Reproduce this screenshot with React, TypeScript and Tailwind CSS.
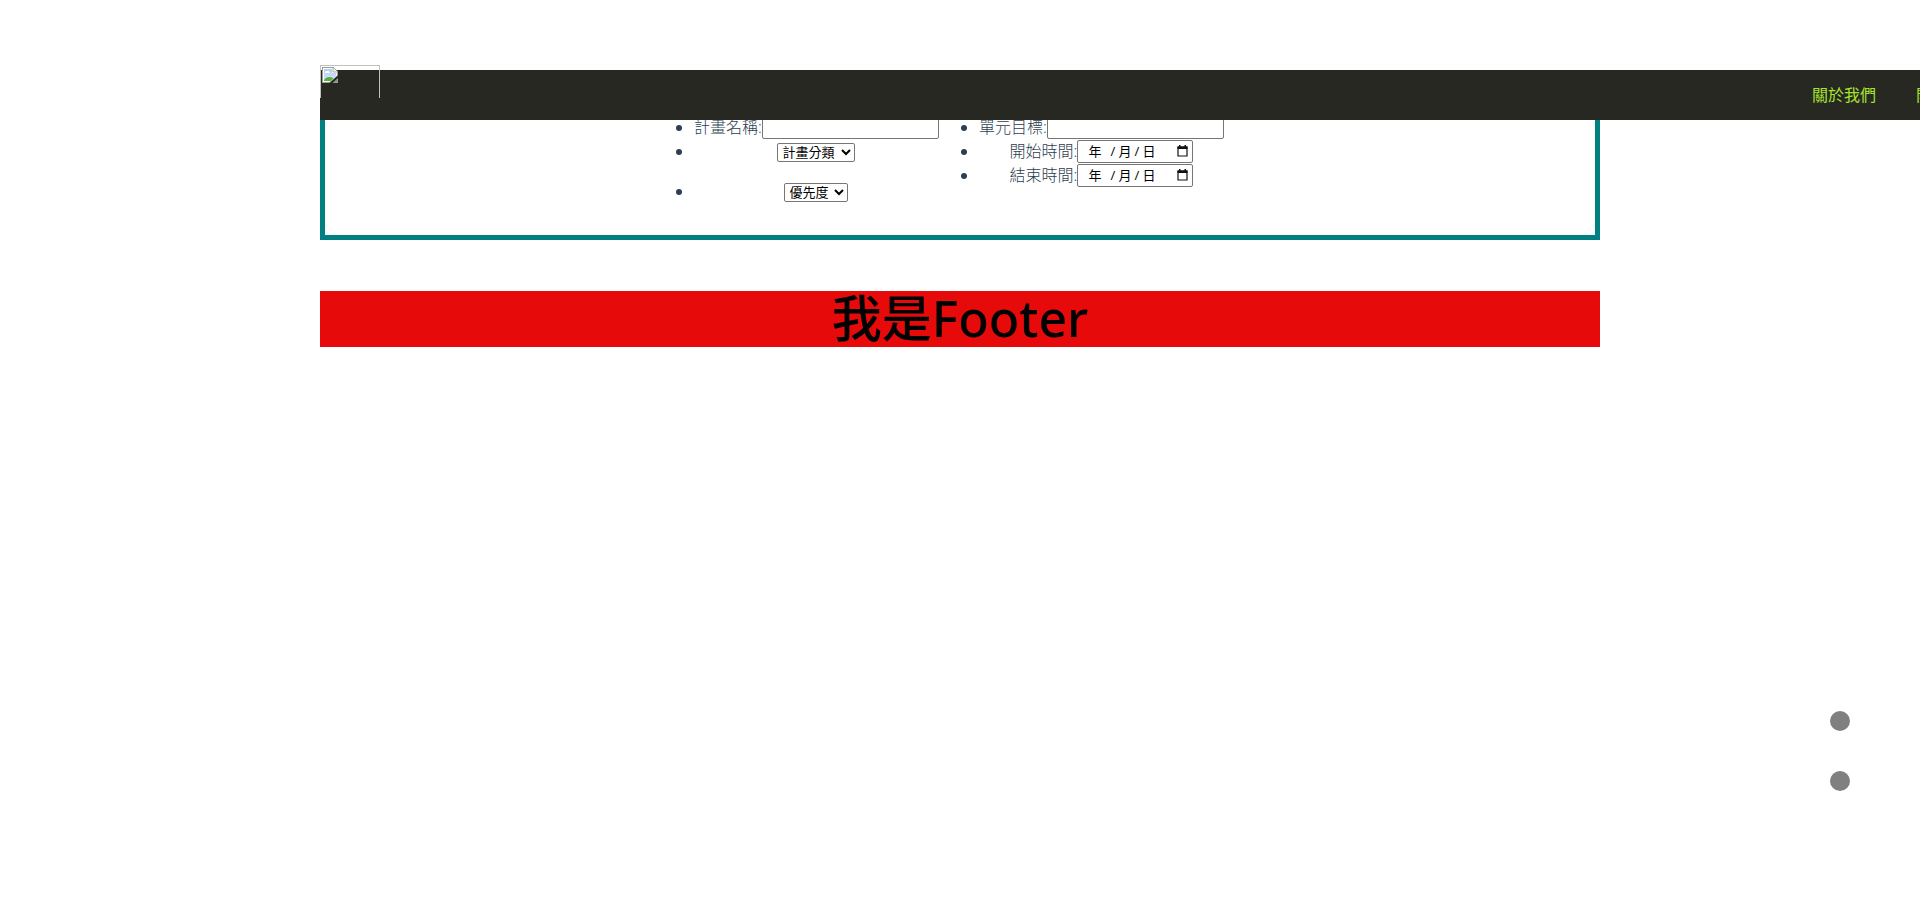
import React from "react";

function BrokenImageIcon() {
  return (
    <svg width="16" height="16" viewBox="0 0 16 16" aria-hidden="true">
      <defs>
        <linearGradient id="sky" x1="0" y1="0" x2="0" y2="1">
          <stop offset="0" stopColor="#b4cdf5" />
          <stop offset="1" stopColor="#dbe6fa" />
        </linearGradient>
      </defs>
      <path d="M0 0H11L16 5V8.500L7.500 16H0Z" fill="#9a9a9a" />
      <path d="M1 1H11V5H15V8.500L7.500 15H1Z" fill="#fff" />
      <path d="M2 2H10V6H14V9L8.500 14H2Z" fill="url(#sky)" />
      <path d="M3 5.500C3 4 5 3.500 5.500 4.200C7 3.500 8 5 7.500 6H3Z" fill="#fff" />
      <path d="M2 14V13C4 9.500 8 9 11.500 11.300L8.500 14Z" fill="#58b03c" />
      <path d="M11 0L16 5H11Z" fill="#f4f4f4" stroke="#9a9a9a" strokeWidth="0.8" />
      <path d="M16 11V16H10.500Z" fill="#9a9a9a" />
      <path d="M15 12.500V15H12Z" fill="#58b03c" />
    </svg>
  );
}

function CalendarIcon() {
  return (
    <svg width="11" height="12" viewBox="0 0 11 12" aria-hidden="true">
      <path d="M1 2H10V11H1Z" fill="none" stroke="#111" strokeWidth="1.2" />
      <path d="M0.500 1.500H10.500V4H0.500ZM2 0H3.500V2H2ZM7.500 0H9V2H7.500Z" fill="#111" />
    </svg>
  );
}

const fieldBorder = "rounded-[2px] border border-[#767676] bg-white font-normal text-black";

function TextField({ id, label }: { id: string; label: string }) {
  return (
    <li className="h-6">
      <div className="flex h-6 items-center">
        <label htmlFor={id}>{label}:</label>
        <input id={id} type="text" className={`h-6 w-[177px] px-1 text-[13px] ${fieldBorder}`} />
      </div>
    </li>
  );
}

function SelectField({ label, width }: { label: string; width: string }) {
  return (
    <li className="h-10">
      <div className="flex h-6 items-center justify-center">
        <span className="relative flex">
          <select aria-label={label} className={`h-[19px] appearance-none pl-1 text-[13px] leading-4 ${width} ${fieldBorder}`}>
            <option>{label}</option>
          </select>
          <svg className="pointer-events-none absolute top-[6px] right-1" width="10" height="7" viewBox="0 0 10 7" aria-hidden="true">
            <path d="M1 1L5 5L9 1" fill="none" stroke="#000" strokeWidth="2" />
          </svg>
        </span>
      </div>
    </li>
  );
}

const segment = "w-[14px] bg-transparent placeholder:text-black placeholder:opacity-100";

function DateField({ id, label }: { id: string; label: string }) {
  return (
    <li className="h-6">
      <div className="flex h-6 items-center justify-center">
        <label htmlFor={id}>{label}:</label>
        <span className={`flex h-[23px] w-[116px] items-center pr-1 pl-[10px] text-[13px] leading-4 ${fieldBorder}`}>
          <input id={id} placeholder="年" className="w-[22px] bg-transparent placeholder:text-black placeholder:opacity-100" />
          <span className="w-2">/</span>
          <input aria-label={`${label} 月`} placeholder="月" className={segment} />
          <span className="w-[10px] pl-0.5">/</span>
          <input aria-label={`${label} 日`} placeholder="日" className={segment} />
          <button type="button" aria-label={label} className="ml-auto">
            <CalendarIcon />
          </button>
        </span>
      </div>
    </li>
  );
}

export default function App() {
  return (
    <div className="min-h-screen overflow-x-hidden bg-white pt-[70px] font-['Open_Sans','Noto_Sans_CJK_TC',sans-serif] text-[#2c3e50]">
      <header className="relative z-10 ml-[calc(100%/6)] flex h-[50px] items-center bg-[#272822]">
        <a href="#" aria-label="Logo" className="-mt-[5px] h-[33px] w-[60px] self-start border border-b-0 border-[#c0c0c0] p-px">
          <BrokenImageIcon />
        </a>
        <nav className="ml-auto w-[108px] overflow-hidden">
          <ul className="flex gap-10 whitespace-nowrap text-base text-[#a6e22e]">
            <li><a href="#">關於我們</a></li>
            <li><a href="#">開</a></li>
          </ul>
        </nav>
      </header>

      <main className="mx-auto -mt-[10px] flex h-[130px] w-2/3 justify-center gap-10 border-[5px] border-[#008080] pr-0.5 font-light">
        <ul className="w-[245px] list-disc">
          <TextField id="plan" label="計畫名稱" />
          <SelectField label="計畫分類" width="w-[78px]" />
          <SelectField label="優先度" width="w-[64px]" />
        </ul>
        <ul className="w-[245px] list-disc">
          <TextField id="goal" label="單元目標" />
          <DateField id="start" label="開始時間" />
          <DateField id="end" label="結束時間" />
        </ul>
      </main>

      <footer className="mx-auto mt-[51px] h-14 w-2/3 bg-[#e60a0a] text-center font-['Noto_Sans','Noto_Sans_CJK_TC',sans-serif] text-[50px] leading-[54px] font-medium text-black">
        我是Footer
      </footer>

      <div className="fixed right-[70px] bottom-[120px] flex flex-col gap-10">
        <button type="button" aria-label="Up" className="size-5 rounded-full bg-[#808080]" />
        <button type="button" aria-label="Down" className="size-5 rounded-full bg-[#808080]" />
      </div>
    </div>
  );
}
